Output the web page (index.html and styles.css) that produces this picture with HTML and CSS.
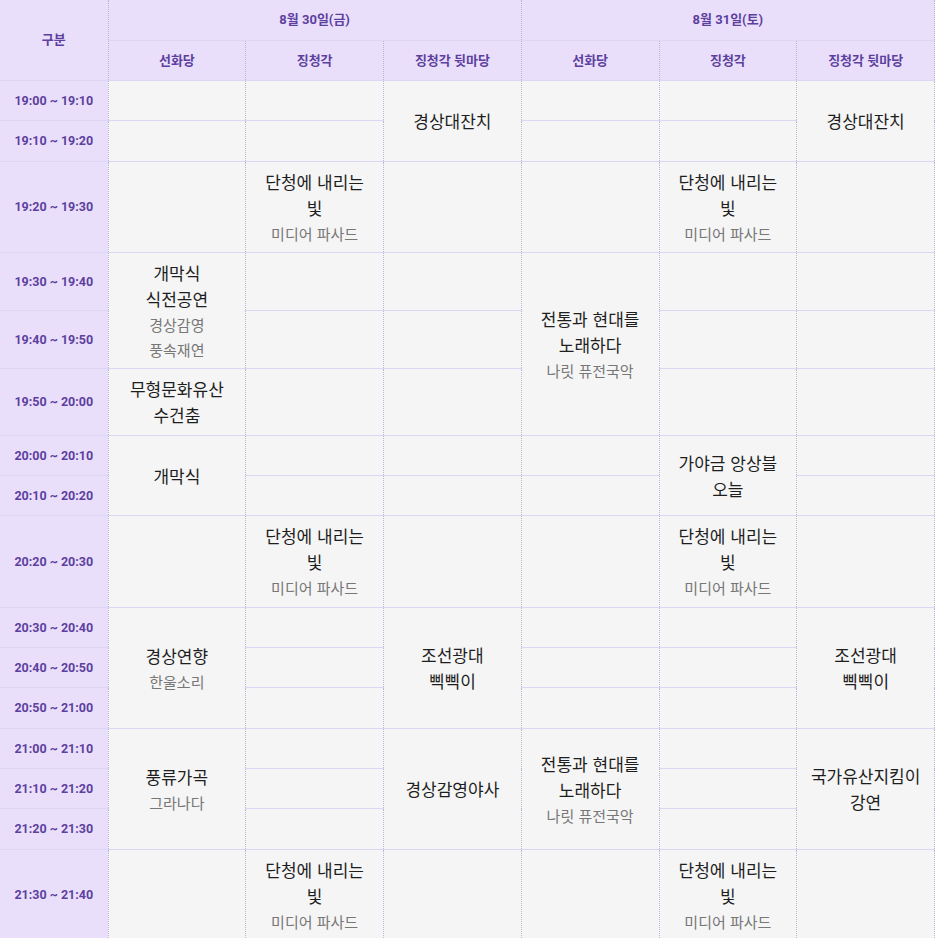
FILE: index.html
```html
<!DOCTYPE html>
<html lang="ko">
<head>
  <meta charset="UTF-8">
  <meta name="viewport" content="width=device-width, initial-scale=1.0">
  <title>프로그램 일정표</title>
  <link rel="stylesheet" href="styles.css">
</head>
<body>

  <!-- 일정표 -->
  <table class="schedule">
    <colgroup>
      <col class="col-time">
      <col><col><col><col><col><col>
    </colgroup>
    <thead>
      <tr>
        <th rowspan="2">구분</th>
        <th colspan="3">8월 30일(금)</th>
        <th colspan="3">8월 31일(토)</th>
      </tr>
      <tr>
        <th>선화당</th>
        <th>징청각</th>
        <th>징청각 뒷마당</th>
        <th>선화당</th>
        <th>징청각</th>
        <th>징청각 뒷마당</th>
      </tr>
    </thead>
    <tbody>
      <tr>
        <th class="time">19:00 ~ 19:10</th>
        <td></td>
        <td></td>
        <td rowspan="2"><p class="title">경상대잔치</p></td>
        <td></td>
        <td></td>
        <td rowspan="2"><p class="title">경상대잔치</p></td>
      </tr>
      <tr>
        <th class="time">19:10 ~ 19:20</th>
        <td></td>
        <td></td>
        <td></td>
        <td></td>
      </tr>
      <tr>
        <th class="time">19:20 ~ 19:30</th>
        <td></td>
        <td><p class="title">단청에 내리는<br>빛</p><p class="sub">미디어 파사드</p></td>
        <td></td>
        <td></td>
        <td><p class="title">단청에 내리는<br>빛</p><p class="sub">미디어 파사드</p></td>
        <td></td>
      </tr>
      <tr>
        <th class="time">19:30 ~ 19:40</th>
        <td rowspan="2"><p class="title">개막식<br>식전공연</p><p class="sub">경상감영<br>풍속재연</p></td>
        <td></td>
        <td></td>
        <td rowspan="3"><p class="title">전통과 현대를<br>노래하다</p><p class="sub">나릿 퓨전국악</p></td>
        <td></td>
        <td></td>
      </tr>
      <tr>
        <th class="time">19:40 ~ 19:50</th>
        <td></td>
        <td></td>
        <td></td>
        <td></td>
      </tr>
      <tr>
        <th class="time">19:50 ~ 20:00</th>
        <td><p class="title">무형문화유산<br>수건춤</p></td>
        <td></td>
        <td></td>
        <td></td>
        <td></td>
      </tr>
      <tr>
        <th class="time">20:00 ~ 20:10</th>
        <td rowspan="2"><p class="title">개막식</p></td>
        <td></td>
        <td></td>
        <td></td>
        <td rowspan="2"><p class="title">가야금 앙상블<br>오늘</p></td>
        <td></td>
      </tr>
      <tr>
        <th class="time">20:10 ~ 20:20</th>
        <td></td>
        <td></td>
        <td></td>
        <td></td>
      </tr>
      <tr>
        <th class="time">20:20 ~ 20:30</th>
        <td></td>
        <td><p class="title">단청에 내리는<br>빛</p><p class="sub">미디어 파사드</p></td>
        <td></td>
        <td></td>
        <td><p class="title">단청에 내리는<br>빛</p><p class="sub">미디어 파사드</p></td>
        <td></td>
      </tr>
      <tr>
        <th class="time">20:30 ~ 20:40</th>
        <td rowspan="3"><p class="title">경상연향</p><p class="sub">한울소리</p></td>
        <td></td>
        <td rowspan="3"><p class="title">조선광대<br>삑삑이</p></td>
        <td></td>
        <td></td>
        <td rowspan="3"><p class="title">조선광대<br>삑삑이</p></td>
      </tr>
      <tr>
        <th class="time">20:40 ~ 20:50</th>
        <td></td>
        <td></td>
        <td></td>
      </tr>
      <tr>
        <th class="time">20:50 ~ 21:00</th>
        <td></td>
        <td></td>
        <td></td>
      </tr>
      <tr>
        <th class="time">21:00 ~ 21:10</th>
        <td rowspan="3"><p class="title">풍류가곡</p><p class="sub">그라나다</p></td>
        <td></td>
        <td rowspan="3"><p class="title">경상감영야사</p></td>
        <td rowspan="3"><p class="title">전통과 현대를<br>노래하다</p><p class="sub">나릿 퓨전국악</p></td>
        <td></td>
        <td rowspan="3"><p class="title">국가유산지킴이<br>강연</p></td>
      </tr>
      <tr>
        <th class="time">21:10 ~ 21:20</th>
        <td></td>
        <td></td>
      </tr>
      <tr>
        <th class="time">21:20 ~ 21:30</th>
        <td></td>
        <td></td>
      </tr>
      <tr>
        <th class="time">21:30 ~ 21:40</th>
        <td></td>
        <td><p class="title">단청에 내리는<br>빛</p><p class="sub">미디어 파사드</p></td>
        <td></td>
        <td></td>
        <td><p class="title">단청에 내리는<br>빛</p><p class="sub">미디어 파사드</p></td>
        <td></td>
      </tr>
    </tbody>
  </table>

</body>
</html>
```

FILE: styles.css
```css
body {
  margin: 0;
  padding: 0;
  background-color: #ffffff;
  font-family: Roboto, "Noto Sans CJK KR", sans-serif;
}

.schedule {
  width: 935px;
  border-collapse: collapse;
  table-layout: fixed;
}

.col-time {
  width: 108px;
}

.schedule th,
.schedule td {
  padding: 7px 6px 6.35px;
  text-align: center;
  vertical-align: middle;
  line-height: 26px;
  border-bottom: 1px solid #dcd5f3;
  border-right: 1px dotted #bdb6d2;
}

.schedule thead th {
  padding-top: 7px;
  padding-bottom: 6.5px;
  background-color: #eadffa;
  color: #5d3f9f;
  font-size: 13px;
  font-weight: 700;
}

.schedule td {
  background-color: #f5f5f5;
}

.time {
  background-color: #eadffa;
  color: #5d3f9f;
  font-size: 12.5px;
  font-weight: 700;
  white-space: nowrap;
}

.title {
  margin: 0;
  font-family: "Noto Sans CJK KR", sans-serif;
  font-size: 17px;
  color: #1e1e1e;
}

.sub {
  margin: 0;
  font-family: "Noto Sans CJK KR", sans-serif;
  font-size: 15px;
  line-height: 25px;
  color: #777777;
}
```
